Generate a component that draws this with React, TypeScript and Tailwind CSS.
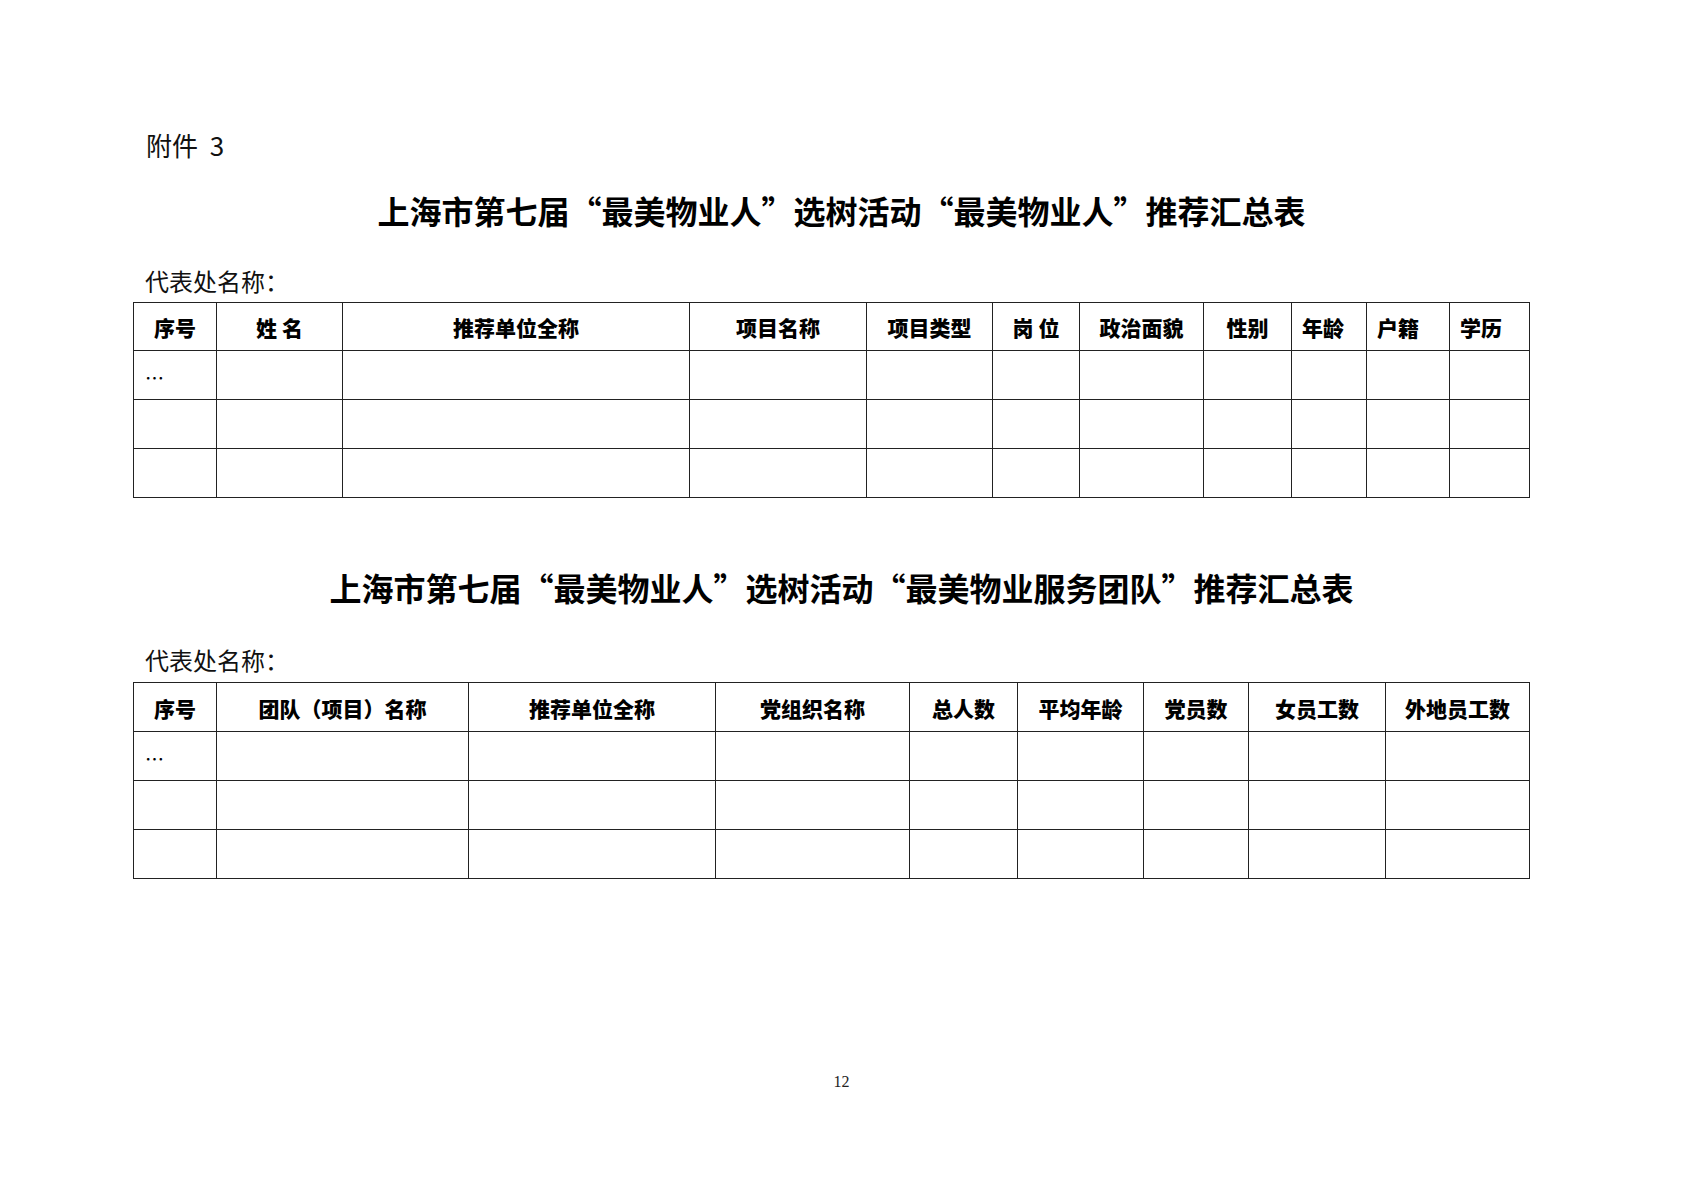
const sans = "font-['Noto_Sans_CJK_SC','Noto_Sans',sans-serif]";

type Col = { label: string; w: string; align?: "left" };

const cols1: Col[] = [
  { label: "序号", w: "w-[83px]" },
  { label: "姓 名", w: "w-[126px]" },
  { label: "推荐单位全称", w: "w-[347px]" },
  { label: "项目名称", w: "w-[177px]" },
  { label: "项目类型", w: "w-[126px]" },
  { label: "岗 位", w: "w-[87px]" },
  { label: "政治面貌", w: "w-[124px]" },
  { label: "性别", w: "w-[88px]" },
  { label: "年龄", w: "w-[75px]", align: "left" },
  { label: "户籍", w: "w-[83px]", align: "left" },
  { label: "学历", w: "w-[80px]", align: "left" },
];

const cols2: Col[] = [
  { label: "序号", w: "w-[83px]" },
  { label: "团队（项目）名称", w: "w-[252px]" },
  { label: "推荐单位全称", w: "w-[247px]" },
  { label: "党组织名称", w: "w-[194px]" },
  { label: "总人数", w: "w-[108px]" },
  { label: "平均年龄", w: "w-[126px]" },
  { label: "党员数", w: "w-[105px]" },
  { label: "女员工数", w: "w-[137px]" },
  { label: "外地员工数", w: "w-[144px]" },
];

const SummaryTable = ({ cols, tall }: { cols: Col[]; tall?: boolean }) => {
  return (
    <table className="w-[1396px] table-fixed border-collapse border border-[#222]">
      <colgroup>
        {cols.map((c, i) => (
          <col key={i} className={c.w} />
        ))}
      </colgroup>
      <thead>
        <tr className={tall ? "h-[49px]" : "h-[48px]"}>
          {cols.map((c, i) => (
            <th
              key={i}
              className={`border border-[#222] pt-[3px] text-[21px] font-black text-black whitespace-pre ${
                c.align === "left" ? "text-left pl-[10px]" : "text-center"
              }`}
            >
              {c.label}
            </th>
          ))}
        </tr>
      </thead>
      <tbody>
        {[0, 1, 2].map((r) => (
          <tr key={r} className="h-[49px]">
            {cols.map((c, i) => (
              <td key={i} className="border border-[#222] p-0 align-middle">
                {r === 0 && i === 0 ? (
                  <span className="block pl-[11px] pt-[4px] text-[19px] leading-none text-black">…</span>
                ) : null}
              </td>
            ))}
          </tr>
        ))}
      </tbody>
    </table>
  );
};

const Title = ({ children }: { children: React.ReactNode }) => (
  <h1 className="text-center text-[32px] leading-[40px] font-bold text-black">{children}</h1>
);

const App = () => {
  return (
    <div className={`w-[1683px] h-[1190px] bg-white ${sans}`}>
      <div className="flex flex-col pl-[133px] pt-[129px]">
        <div className="pl-[13px] text-[26px] leading-[32px] text-[#111]">附件&nbsp;&nbsp;3</div>

        <div className="mt-[29px] -ml-[133px] w-[1683px]">
          <Title>上海市第七届“最美物业人”选树活动“最美物业人”推荐汇总表</Title>
        </div>

        <div className="mt-[37px] pl-[12px] text-[24px] leading-[28px] text-[#111]">代表处名称：</div>
        <div className="mt-[7px]">
          <SummaryTable cols={cols1} />
        </div>

        <div className="mt-[69px] -ml-[133px] w-[1683px]">
          <Title>上海市第七届“最美物业人”选树活动“最美物业服务团队”推荐汇总表</Title>
        </div>

        <div className="mt-[39px] pl-[12px] text-[24px] leading-[28px] text-[#111]">代表处名称：</div>
        <div className="mt-[8px]">
          <SummaryTable cols={cols2} tall />
        </div>

        <div className="mt-[193px] -ml-[133px] w-[1683px] text-center font-['Liberation_Serif',serif] text-[16px] leading-[20px] text-[#222]">
          12
        </div>
      </div>
    </div>
  );
};

export default App;
